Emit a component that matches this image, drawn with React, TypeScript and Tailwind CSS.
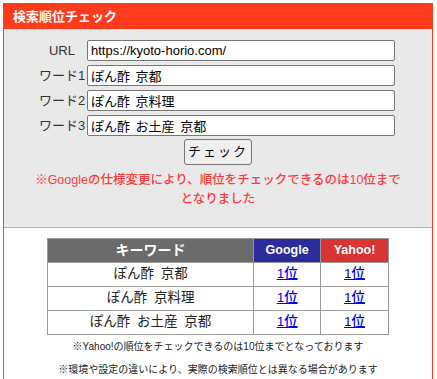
export default function App() {
  const fields = [
    { label: 'URL', value: 'https://kyoto-horio.com/' },
    { label: 'ワード1', value: 'ぽん酢 京都' },
    { label: 'ワード2', value: 'ぽん酢 京料理' },
    { label: 'ワード3', value: 'ぽん酢 お土産 京都' },
  ]
  const rows = ['ぽん酢 京都', 'ぽん酢 京料理', 'ぽん酢 お土産 京都']

  return (
    <div className="min-h-screen bg-white pt-[3px] pl-[3px] font-['Liberation_Sans','Noto_Sans_CJK_JP',sans-serif] text-[#222]">
      <div className="w-[430px] border-x border-[#ff3b1e]">
        <div className="h-[26px] bg-[#ff3b1e] flex items-center pl-[9px] text-white font-bold text-[13px] leading-none">
          検索順位チェック
        </div>

        <div className="h-[199px] bg-[#e9e9e9] border-b border-[#b2b2b2] pt-[11px]">
          <div className="flex flex-col gap-[4px]">
            {fields.map((f) => (
              <div key={f.label} className="flex items-center">
                <label className="ml-[34px] w-[48px] text-center text-[13px] leading-none text-[#333]">{f.label}</label>
                <input
                  readOnly
                  value={f.value}
                  className="ml-[1px] w-[308px] h-[21px] border border-[#767676] rounded-[2px] bg-white px-[3px] text-[13px] text-black outline-none [word-spacing:2px]"
                />
              </div>
            ))}
          </div>
          <button className="mt-[3px] mx-auto flex items-center justify-center w-[68px] h-[26px] border border-[#767676] rounded-[3px] bg-[#efefef] text-[13px] tracking-[2px] text-black">
            チェック
          </button>
          <p className="mt-[6px] px-[28px] text-center text-[12.5px] leading-[19px] font-medium text-[#ff3b3b]">
            ※Googleの仕様変更により、順位をチェックできるのは10位までとなりました
          </p>
        </div>

        <div className="bg-white pt-[10px]">
          <table className="mx-auto w-[342px] border-collapse text-center">
            <thead>
              <tr className="h-[24px] text-white font-bold">
                <th className="w-[207px] border border-[#999] bg-[#6b6b6b] text-[14px]">キーワード</th>
                <th className="w-[67px] border border-[#999] bg-[#2b2b9b] text-[12.5px]">Google</th>
                <th className="w-[68px] border border-[#999] bg-[#d83434] text-[12.5px]">Yahoo!</th>
              </tr>
            </thead>
            <tbody>
              {rows.map((r) => (
                <tr key={r} className="h-[24px] text-[13.5px]">
                  <td className="border border-[#999] text-[#222] [word-spacing:3px]">{r}</td>
                  <td className="border border-[#999]">
                    <a href="#" className="text-[#0000ee] underline font-medium">1位</a>
                  </td>
                  <td className="border border-[#999]">
                    <a href="#" className="text-[#0000ee] underline font-medium">1位</a>
                  </td>
                </tr>
              ))}
            </tbody>
          </table>
          <p className="text-center text-[10px] leading-[23px] text-[#222]">
            ※Yahoo!の順位をチェックできるのは10位までとなっております
          </p>
          <p className="text-center text-[10px] leading-[23px] text-[#222]">
            ※環境や設定の違いにより、実際の検索順位とは異なる場合があります
          </p>
        </div>
      </div>
    </div>
  )
}
